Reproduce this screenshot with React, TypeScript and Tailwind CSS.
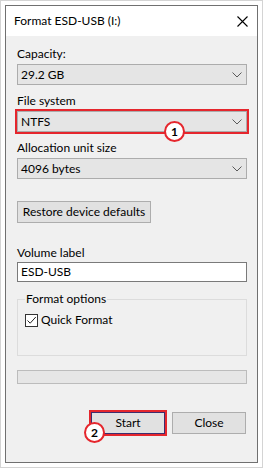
import React from "react";

const Chevron = () => (
  <svg width="10" height="6" viewBox="0 0 10 6" className="shrink-0">
    <path d="M0.5 0.5 L5 5 L9.5 0.5" fill="none" stroke="#5a5a5a" strokeWidth="1" />
  </svg>
);

const Label = ({ text, className = "" }: { text: string; className?: string }) => (
  <div className={"h-[16px] leading-[16px] " + className}>{text}</div>
);

const Select = ({ value, highlight = false }: { value: string; highlight?: boolean }) => (
  <div
    className={
      "mt-[2px] flex h-[21px] items-center justify-between border border-[#acacac] bg-[#e5e5e5] pl-[3px] pr-[4px] " +
      (highlight ? "outline-2 outline-[#e5262d]" : "")
    }
  >
    <span>{value}</span>
    <Chevron />
  </div>
);

const Badge = ({ n, className }: { n: string; className: string }) => (
  <div
    className={
      "absolute flex h-[21px] w-[21px] items-center justify-center rounded-full border-2 border-[#e5262d] bg-white text-[12px] font-bold leading-none text-black " +
      className
    }
  >
    {n}
  </div>
);

export default function App() {
  return (
    <div className="relative h-[468px] w-[263px] border border-[#d4d4d4] bg-white p-[4px] font-['Lato',sans-serif] text-[12px] text-black">
      <div className="flex h-full flex-col border border-[#707070]">
        <div className="flex h-[30px] items-center justify-between bg-white pl-[8px] pr-[9px]">
          <span>Format ESD-USB (I:)</span>
          <svg width="11" height="11" viewBox="0 0 11 11">
            <path d="M0.5 0.5 L10.5 10.5 M10.5 0.5 L0.5 10.5" stroke="#000" strokeWidth="1.1" />
          </svg>
        </div>
        <div className="flex flex-1 flex-col bg-[#f0f0f0] pl-[11px] pr-[10px]">
          <Label text="Capacity:" className="mt-[10px]" />
          <Select value="29.2 GB" />
          <Label text="File system" className="mt-[8px]" />
          <Select value="NTFS" highlight />
          <Label text="Allocation unit size" className="mt-[8px]" />
          <Select value="4096 bytes" />
          <button className="mt-[22px] h-[22px] w-[134px] border border-[#adadad] bg-[#e1e1e1] leading-[16px]">
            Restore device defaults
          </button>
          <Label text="Volume label" className="mt-[22px]" />
          <div className="mt-[1px] flex h-[20px] items-center border border-[#7a7a7a] bg-white pl-[3px]">
            ESD-USB
          </div>
          <fieldset className="mt-[9px] h-[65px] border border-[#dcdcdc] px-[7px]">
            <legend className="px-[1px] leading-[16px]">Format options</legend>
            <div className="mt-[5px] flex items-center gap-[3px] leading-[16px]">
              <span className="flex h-[13px] w-[13px] items-center justify-center border border-[#333] bg-white">
                <svg width="11" height="11" viewBox="0 0 11 11">
                  <path d="M1.5 5.5 L4.2 8.2 L9.8 2" fill="none" stroke="#222" strokeWidth="1" />
                </svg>
              </span>
              <span>Quick Format</span>
            </div>
          </fieldset>
          <div className="mt-[14px] h-[14px] border border-[#bcbcbc] bg-[#e6e6e6]" />
          <div className="mt-[28px] mr-[1px] flex justify-end gap-[7px]">
            <button className="h-[22px] w-[74px] border border-[#3d2d6e] bg-[#e1e1e1] outline-2 outline-[#e5262d]">
              Start
            </button>
            <button className="h-[22px] w-[74px] border border-[#adadad] bg-[#e1e1e1]">Close</button>
          </div>
        </div>
      </div>
      <Badge n="1" className="left-[163px] top-[120px]" />
      <Badge n="2" className="left-[83px] top-[421px]" />
    </div>
  );
}
